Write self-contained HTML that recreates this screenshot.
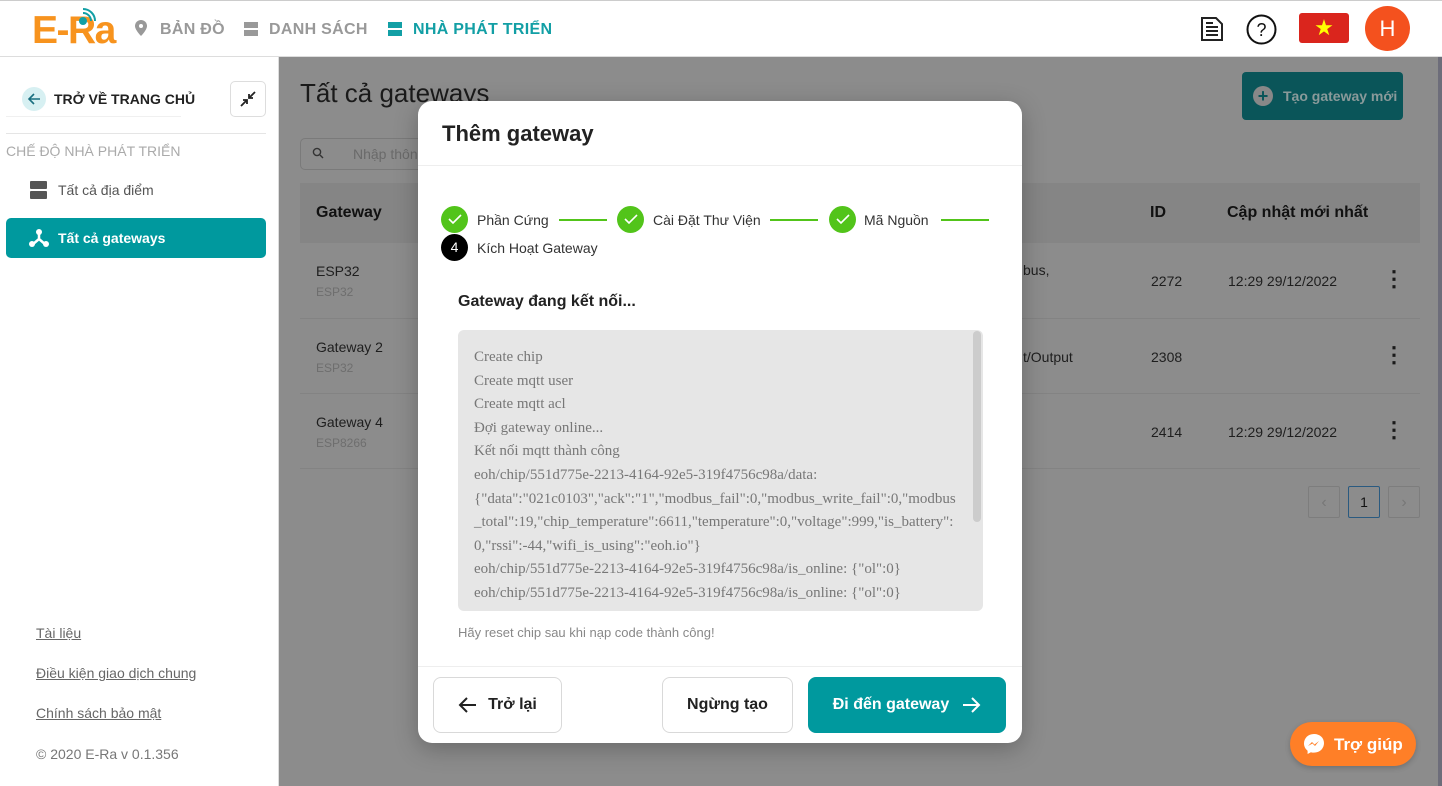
<!DOCTYPE html>
<html><head><meta charset="utf-8"><style>
*{box-sizing:border-box;margin:0;padding:0}
body{width:1442px;height:786px;overflow:hidden;font-family:"Liberation Sans",sans-serif;background:#fff;position:relative;color:#222}
.abs{position:absolute}
.hdr{left:0;top:0;width:1442px;height:57px;background:#fff;border-bottom:1px solid #ddd;border-top:1px solid #ccc}
.nav{font-weight:bold;font-size:16px;top:21px;letter-spacing:.3px}
.side{left:0;top:57px;width:279px;height:729px;background:#fff;border-right:1px solid #ddd}
.ov{left:279px;top:57px;width:1159px;height:729px;background:#8c8c8c}
.rb{left:1438px;top:57px;width:4px;height:729px;background:#6d6d7a}
.modal{left:418px;top:101px;width:604px;height:642px;background:#fff;border-radius:14px;box-shadow:0 6px 24px rgba(0,0,0,.25)}
.chk{width:27px;height:27px;border-radius:50%;background:#52c41a;display:flex;align-items:center;justify-content:center}
.step{font-size:14px;color:#333}
.line{height:2px;background:#52c41a}
.btn{border:1px solid #d9d9d9;border-radius:8px;background:#fff;display:flex;align-items:center;justify-content:center;font-weight:bold;font-size:16px;color:#222}
.log{font-family:"Liberation Serif",serif;font-size:15px;color:#777;line-height:23.6px}
.tx{font-size:14px;color:#1e1e1e}
.sub{font-size:12px;color:#6e6e6e}
</style></head><body>
<div class="abs hdr"></div>
<div class="abs" style="left:32px;top:11px;font-weight:bold;font-size:39px;color:#f7931e;letter-spacing:-1.5px;line-height:39px">E-Ra</div>
<svg class="abs" style="left:74px;top:7px" width="30" height="22" viewBox="0 0 30 22"><circle cx="9" cy="14" r="4" fill="#129fa5"/><path d="M9 6a8 8 0 0 1 8 8M9 2a12 12 0 0 1 12 12" stroke="#129fa5" stroke-width="2" fill="none"/></svg>
<svg class="abs" style="left:135px;top:20px" width="12" height="16" viewBox="0 0 12 16"><path d="M6 0a6 6 0 0 0-6 6c0 4 6 10 6 10s6-6 6-10a6 6 0 0 0-6-6z" fill="#999"/><circle cx="6" cy="6" r="2" fill="#fff"/></svg>
<div class="abs nav" style="left:160px;color:#999">BẢN ĐỒ</div>
<div class="abs" style="left:244px;top:22px;width:14px;height:6px;background:#999"></div><div class="abs" style="left:244px;top:30px;width:14px;height:6px;background:#999"></div>
<div class="abs nav" style="left:269px;color:#999">DANH SÁCH</div>
<div class="abs" style="left:388px;top:22px;width:14px;height:6px;background:#129fa5"></div><div class="abs" style="left:388px;top:30px;width:14px;height:6px;background:#129fa5"></div>
<div class="abs nav" style="left:413px;color:#129fa5">NHÀ PHÁT TRIỂN</div>
<svg class="abs" style="left:1199px;top:16px" width="26" height="26" viewBox="0 0 26 26"><path d="M3 2h14l6 6v16H3z" fill="none" stroke="#222" stroke-width="2"/><path d="M7 11h12M7 15h12M7 19h12M7 7h7" stroke="#222" stroke-width="2"/></svg>
<svg class="abs" style="left:1246px;top:14px" width="31" height="31" viewBox="0 0 31 31"><circle cx="15.5" cy="15.5" r="14" fill="none" stroke="#111" stroke-width="2"/><text x="15.5" y="22" text-anchor="middle" font-size="18" font-family="Liberation Sans" fill="#111">?</text></svg>
<div class="abs" style="left:1299px;top:13px;width:50px;height:30px;background:#da251d;border-radius:3px;color:#ff0;font-size:22px;text-align:center;line-height:30px">★</div>
<div class="abs" style="left:1365px;top:6px;width:45px;height:45px;border-radius:50%;background:#f4511e;color:#fff;font-size:22px;text-align:center;line-height:45px">H</div>

<div class="abs side"></div>
<div class="abs" style="left:22px;top:87px;width:24px;height:24px;border-radius:50%;background:#d7f0f2"></div>
<svg class="abs" style="left:26px;top:91px" width="16" height="16" viewBox="0 0 16 16"><path d="M14 8H3M8 3L3 8l5 5" stroke="#1a6f80" stroke-width="1.6" fill="none"/></svg>
<div class="abs" style="left:54px;top:91px;font-weight:bold;font-size:14px;color:#222">TRỞ VỀ TRANG CHỦ</div>
<div class="abs" style="left:6px;top:116px;width:175px;height:1px;background:#f0f0f0"></div>
<div class="abs" style="left:230px;top:81px;width:36px;height:36px;border:1px solid #ddd;border-radius:5px"></div>
<svg class="abs" style="left:239px;top:90px" width="18" height="18" viewBox="0 0 18 18"><path d="M2 16l6-6M4 10h4v4M16 2l-6 6M10 4v4h4" stroke="#222" stroke-width="1.8" fill="none"/></svg>
<div class="abs" style="left:6px;top:133px;width:260px;height:1px;background:#e5e5e5"></div>
<div class="abs" style="left:6px;top:143px;font-size:14px;color:#aaa">CHẾ ĐỘ NHÀ PHÁT TRIỂN</div>
<div class="abs" style="left:30px;top:181px;width:17px;height:8px;background:#555;border-radius:1px"></div><div class="abs" style="left:30px;top:191px;width:17px;height:8px;background:#555;border-radius:1px"></div>
<div class="abs" style="left:58px;top:182px;font-size:14px;color:#555">Tất cả địa điểm</div>
<div class="abs" style="left:6px;top:218px;width:260px;height:40px;background:#00999e;border-radius:5px"></div>
<svg class="abs" style="left:29px;top:229px" width="20" height="18" viewBox="0 0 20 18"><path d="M10 2v8M10 10l-7 6M10 10l7 6" stroke="#fff" stroke-width="2.5"/><circle cx="10" cy="3" r="3" fill="#fff"/><circle cx="3" cy="15" r="3" fill="#fff"/><circle cx="17" cy="15" r="3" fill="#fff"/></svg>
<div class="abs" style="left:58px;top:230px;font-size:14px;color:#fff;font-weight:bold">Tất cả gateways</div>
<div class="abs" style="left:36px;top:625px;font-size:14px;color:#666;text-decoration:underline">Tài liệu</div>
<div class="abs" style="left:36px;top:665px;font-size:14px;color:#666;text-decoration:underline">Điều kiện giao dịch chung</div>
<div class="abs" style="left:36px;top:705px;font-size:14px;color:#666;text-decoration:underline">Chính sách bảo mật</div>
<div class="abs" style="left:36px;top:746px;font-size:14px;color:#777">© 2020 E-Ra v 0.1.356</div>

<div class="abs ov"></div>
<div class="abs rb"></div>
<div class="abs" style="left:300px;top:78px;font-size:26px;color:#1a1a1a">Tất cả gateways</div>
<div class="abs" style="left:1242px;top:72px;width:161px;height:48px;background:#0a5559;border-radius:4px"></div>
<div class="abs" style="left:1253px;top:86px;width:20px;height:20px;border-radius:50%;background:#888;color:#0a5559;text-align:center;line-height:20px;font-weight:bold;font-size:18px">+</div>
<div class="abs" style="left:1283px;top:88px;font-size:14px;color:#8a9a9a;font-weight:bold">Tạo gateway mới</div>
<div class="abs" style="left:300px;top:138px;width:130px;height:32px;border:1px solid #7a7a7a;border-radius:5px"></div>
<svg class="abs" style="left:312px;top:147px" width="12" height="12" viewBox="0 0 12 12"><circle cx="5" cy="5" r="3.6" stroke="#333" stroke-width="1.4" fill="none"/><path d="M8 8l3 3" stroke="#333" stroke-width="1.4"/></svg>
<div class="abs" style="left:353px;top:146px;font-size:14px;color:#6a6a6a">Nhập thôn</div>
<div class="abs" style="left:300px;top:183px;width:1120px;height:60px;background:#858585"></div>
<div class="abs" style="left:316px;top:204px;font-size:16px;font-weight:bold;color:#111">Gateway</div>
<div class="abs" style="left:1150px;top:204px;font-size:16px;font-weight:bold;color:#111">ID</div>
<div class="abs" style="left:1227px;top:204px;font-size:16px;font-weight:bold;color:#111">Cập nhật mới nhất</div>
<div class="abs" style="left:300px;top:318px;width:1120px;height:1px;background:#838383"></div>
<div class="abs" style="left:300px;top:393px;width:1120px;height:1px;background:#838383"></div>
<div class="abs" style="left:300px;top:468px;width:1120px;height:1px;background:#838383"></div>
<div class="abs tx" style="left:316px;top:263px">ESP32</div><div class="abs sub" style="left:316px;top:285px">ESP32</div>
<div class="abs tx" style="left:316px;top:339px">Gateway 2</div><div class="abs sub" style="left:316px;top:361px">ESP32</div>
<div class="abs tx" style="left:316px;top:414px">Gateway 4</div><div class="abs sub" style="left:316px;top:436px">ESP8266</div>
<div class="abs tx" style="left:1023px;top:262px">bus,</div>
<div class="abs tx" style="left:1023px;top:349px">t/Output</div>
<div class="abs tx" style="left:1151px;top:273px">2272</div><div class="abs tx" style="left:1228px;top:273px">12:29 29/12/2022</div>
<div class="abs tx" style="left:1151px;top:349px">2308</div>
<div class="abs tx" style="left:1151px;top:424px">2414</div><div class="abs tx" style="left:1228px;top:424px">12:29 29/12/2022</div>
<div class="abs" style="left:1383px;top:266px;font-size:22px;font-weight:bold;color:#1a1a1a">⋮</div>
<div class="abs" style="left:1383px;top:342px;font-size:22px;font-weight:bold;color:#1a1a1a">⋮</div>
<div class="abs" style="left:1383px;top:417px;font-size:22px;font-weight:bold;color:#1a1a1a">⋮</div>
<div class="abs" style="left:1308px;top:486px;width:32px;height:32px;border:1px solid #7d7d7d;border-radius:2px;color:#777;text-align:center;line-height:32px">‹</div>
<div class="abs" style="left:1348px;top:486px;width:32px;height:32px;border:1px solid #2a5a80;border-radius:2px;color:#111;text-align:center;line-height:30px;font-size:14px">1</div>
<div class="abs" style="left:1388px;top:486px;width:32px;height:32px;border:1px solid #7d7d7d;border-radius:2px;color:#777;text-align:center;line-height:32px">›</div>

<div class="abs modal"></div>
<div class="abs" style="left:442px;top:121px;font-size:22px;font-weight:bold;color:#222">Thêm gateway</div>
<div class="abs" style="left:418px;top:165px;width:604px;height:1px;background:#eee"></div>
<div class="abs chk" style="left:441px;top:206px"><svg width="14" height="11" viewBox="0 0 14 11"><path d="M1 5l4 4 8-8" stroke="#fff" stroke-width="1.6" fill="none"/></svg></div>
<div class="abs step" style="left:477px;top:212px">Phần Cứng</div>
<div class="abs line" style="left:559px;top:219px;width:48px"></div>
<div class="abs chk" style="left:617px;top:206px"><svg width="14" height="11" viewBox="0 0 14 11"><path d="M1 5l4 4 8-8" stroke="#fff" stroke-width="1.6" fill="none"/></svg></div>
<div class="abs step" style="left:653px;top:212px">Cài Đặt Thư Viện</div>
<div class="abs line" style="left:770px;top:219px;width:48px"></div>
<div class="abs chk" style="left:829px;top:206px"><svg width="14" height="11" viewBox="0 0 14 11"><path d="M1 5l4 4 8-8" stroke="#fff" stroke-width="1.6" fill="none"/></svg></div>
<div class="abs step" style="left:864px;top:212px">Mã Nguồn</div>
<div class="abs line" style="left:941px;top:219px;width:48px"></div>
<div class="abs" style="left:441px;top:234px;width:27px;height:27px;border-radius:50%;background:#000;color:#fff;font-size:14px;text-align:center;line-height:27px">4</div>
<div class="abs step" style="left:477px;top:240px">Kích Hoạt Gateway</div>
<div class="abs" style="left:458px;top:293px;font-size:16px;font-weight:bold;color:#222">Gateway đang kết nối...</div>
<div class="abs" style="left:458px;top:330px;width:525px;height:281px;background:#e6e6e6;border-radius:6px;overflow:hidden"></div>
<div class="abs" style="left:973px;top:331px;width:8px;height:191px;background:#ccc;border-radius:4px"></div>
<div class="abs log" style="left:474px;top:346px;width:495px;white-space:nowrap">Create chip<br>Create mqtt user<br>Create mqtt acl<br>Đợi gateway online...<br>Kết nối mqtt thành công<br>eoh/chip/551d775e-2213-4164-92e5-319f4756c98a/data:<br>{"data":"021c0103","ack":"1","modbus_fail":0,"modbus_write_fail":0,"modbus<br>_total":19,"chip_temperature":6611,"temperature":0,"voltage":999,"is_battery":<br>0,"rssi":-44,"wifi_is_using":"eoh.io"}<br>eoh/chip/551d775e-2213-4164-92e5-319f4756c98a/is_online: {"ol":0}<br>eoh/chip/551d775e-2213-4164-92e5-319f4756c98a/is_online: {"ol":0}</div>
<div class="abs" style="left:458px;top:625px;font-size:13px;color:#888">Hãy reset chip sau khi nạp code thành công!</div>
<div class="abs" style="left:418px;top:666px;width:604px;height:1px;background:#eee"></div>
<div class="abs btn" style="left:433px;top:677px;width:129px;height:56px"><svg width="20" height="18" viewBox="0 0 20 18" style="margin-right:10px"><path d="M18 9H3M9 2L2 9l7 7" stroke="#222" stroke-width="2" fill="none"/></svg>Trở lại</div>
<div class="abs btn" style="left:662px;top:677px;width:131px;height:56px">Ngừng tạo</div>
<div class="abs btn" style="left:808px;top:677px;width:198px;height:56px;background:#00999e;border-color:#00999e;color:#fff">Đi đến gateway<svg width="20" height="18" viewBox="0 0 20 18" style="margin-left:12px"><path d="M2 9h15M11 2l7 7-7 7" stroke="#fff" stroke-width="2" fill="none"/></svg></div>
<div class="abs" style="left:1290px;top:722px;width:126px;height:44px;border-radius:22px;background:#ff7f27;box-shadow:0 2px 6px rgba(0,0,0,.2)"></div>
<svg class="abs" style="left:1303px;top:733px" width="22" height="22" viewBox="0 0 22 22"><path d="M11 1C5 1 1 5.3 1 10.5c0 3 1.4 5.5 3.6 7.2V21l3.3-1.8c1 .3 2 .4 3.1.4 6 0 10-4.3 10-9.5S17 1 11 1z" fill="#fff"/><path d="M5 13l4-4 2.5 2.5L16 8l-4 5-2.5-2.5z" fill="#ff7f27"/></svg>
<div class="abs" style="left:1334px;top:735px;font-size:17px;font-weight:bold;color:#fff">Trợ giúp</div>
</body></html>
